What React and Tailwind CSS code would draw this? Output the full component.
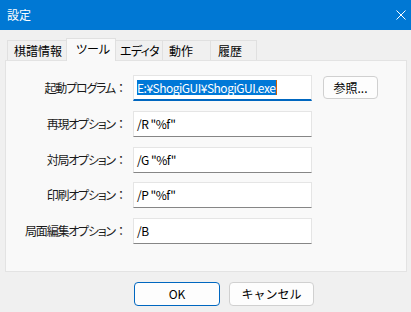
import React from "react";

const jp = "[font-family:'Noto_Sans_CJK_JP',sans-serif]";

function Label({ text }) {
  return (
    <div className="w-[121px] flex justify-end items-center text-[12px] text-[#1a1a1a] leading-none whitespace-nowrap">
      <span className="[font-feature-settings:'palt'] tracking-[-1.2px]">{text}</span>
      <span className="w-[12px] text-center">：</span>
    </div>
  );
}

function Field({ value, focused }) {
  return (
    <div
      className={
        "w-[179px] h-[26px] bg-white border border-[#e5e5e5] flex items-center px-[3px] text-[12px] leading-none text-black tracking-[-0.5px] whitespace-nowrap " +
        (focused ? "border-b-2 border-b-[#0067c0]" : "border-b-[#868686]")
      }
    >
      {focused ? (
        <span className="bg-[#0078d7] text-white h-[15px] flex items-center pr-[1px] border-r border-r-[#d06000]">{value}</span>
      ) : (
        <span>{value}</span>
      )}
    </div>
  );
}

function Row({ label, value, focused, button }) {
  return (
    <div className="flex items-start h-[26px]">
      <div className="h-[26px] flex items-center">
        <Label text={label} />
      </div>
      <div className="ml-[6px]">
        <Field value={value} focused={focused} />
      </div>
      {button && (
        <button className="ml-[11px] mt-[1px] w-[55px] h-[23px] rounded-[4px] border border-[#d0d0d0] bg-[#fdfdfd] text-[12px] leading-none text-black flex items-center justify-center">
          参照...
        </button>
      )}
    </div>
  );
}

export default function App() {
  const tabs = ["棋譜情報", "ツール", "エディタ", "動作", "履歴"];
  const widths = ["w-[59px]", "w-[50px]", "w-[46px]", "w-[48px]", "w-[47px]"];
  const pads = ["pl-[6px]", "pl-[9px]", "pl-[4px]", "pl-[6px]", "pl-[7px]"];
  return (
    <div className={"w-[411px] h-[312px] bg-[#f0f0f0] flex flex-col " + jp}>
      <div className="h-[30px] bg-[#0078d4] flex items-center justify-between pl-[7px] pr-[5px]">
        <span className="text-white text-[12px] leading-none">設定</span>
        <svg width="10" height="10" viewBox="0 0 10 10">
          <path d="M0.5 0.5 L9.5 9.5 M9.5 0.5 L0.5 9.5" stroke="white" strokeWidth="1" />
        </svg>
      </div>
      <div className="h-[30px] flex items-end pl-[7px] relative z-10">
        {tabs.map((t, i) => {
          const sel = i === 1;
          return (
            <div
              key={t}
              className={
                widths[i] + " " + pads[i] +
                " flex items-center whitespace-nowrap overflow-hidden text-[12px] leading-none text-black border-t border-l border-[#e0e0e0] " +
                (i === 4 ? "border-r " : "") +
                (sel
                  ? "h-[23px] -mb-[1px] bg-[#f9f9f9] border-r pb-[3px]"
                  : "h-[20px] bg-[#f0f0f0] " + (i === 2 ? "border-l-0 " : ""))
              }
            >
              <span className={"[font-feature-settings:'palt'] " + (i === 2 ? "tracking-[-0.7px]" : "")}>{t}</span>
            </div>
          );
        })}
      </div>
      <div className="mx-[5px] mr-[4px] h-[212px] bg-[#f9f9f9] border border-[#e3e3e3] pt-[14px] flex flex-col gap-[9.75px]">
        <Row label="起動プログラム" value="E:¥ShogiGUI¥ShogiGUI.exe" focused button />
        <Row label="再現オプション" value={'/R "%f"'} />
        <Row label="対局オプション" value={'/G "%f"'} />
        <Row label="印刷オプション" value={'/P "%f"'} />
        <Row label="局面編集オプション" value="/B" />
      </div>
      <div className="flex pl-[134px] pt-[10px] gap-[9px]">
        <button className="w-[86px] h-[24px] rounded-[4px] border border-[#0067c0] bg-[#fdfdfd] text-[12px] leading-none text-black flex items-center justify-center">
          OK
        </button>
        <button className="w-[85px] h-[24px] rounded-[4px] border border-[#d0d0d0] bg-[#fdfdfd] text-[12px] leading-none text-black flex items-center justify-center">
          キャンセル
        </button>
      </div>
    </div>
  );
}
